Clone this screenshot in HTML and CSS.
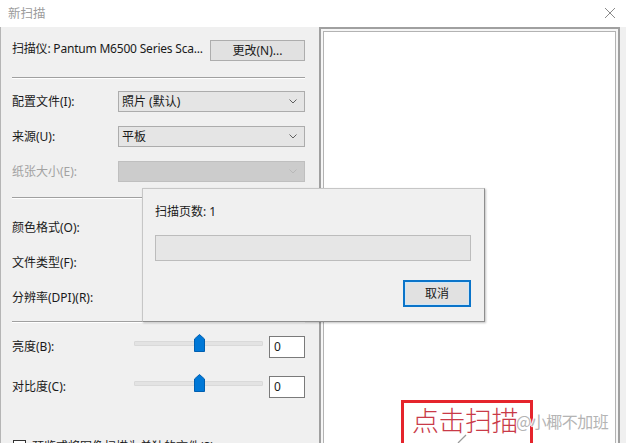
FILE: index.html
```html
<!DOCTYPE html>
<html lang="zh-CN">
<head>
<meta charset="utf-8">
<title>新扫描</title>
<link rel="stylesheet" href="styles.css">
</head>
<body>
<div class="window">
  <header class="titlebar">
    <span class="title">新扫描</span>
    <svg class="close" width="12" height="12" viewBox="0 0 12 12"><path d="M1 1 L11 11 M11 1 L1 11" stroke="#8a8a8a" stroke-width="1" fill="none"/></svg>
  </header>
  <div class="main">
    <section class="left">
      <div class="row scanner">
        <span class="scanner-name">扫描仪: Pantum M6500 Series Sca...</span>
        <span class="btn change">更改(N)...</span>
      </div>
      <div class="sep sep-top"></div>
      <div class="row field">
        <span class="label">配置文件(I):</span>
        <span class="select"><span class="value">照片 (默认)</span><svg class="chev" width="8" height="5" viewBox="0 0 8 5"><path d="M0.5 0.5 L4 4 L7.5 0.5" stroke="#606060" fill="none"/></svg></span>
      </div>
      <div class="row field">
        <span class="label">来源(U):</span>
        <span class="select"><span class="value">平板</span><svg class="chev" width="8" height="5" viewBox="0 0 8 5"><path d="M0.5 0.5 L4 4 L7.5 0.5" stroke="#606060" fill="none"/></svg></span>
      </div>
      <div class="row field last">
        <span class="label disabled">纸张大小(E):</span>
        <span class="select is-disabled"><span class="value"></span><svg class="chev" width="8" height="5" viewBox="0 0 8 5"><path d="M0.5 0.5 L4 4 L7.5 0.5" stroke="#b8b8b8" fill="none"/></svg></span>
      </div>
      <div class="sep sep-mid"></div>
      <div class="plain-rows">
        <div class="row plain"><span class="label">颜色格式(O):</span></div>
        <div class="row plain"><span class="label">文件类型(F):</span></div>
        <div class="row plain"><span class="label">分辨率(DPI)(R):</span></div>
      </div>
      <div class="sep sep-low"></div>
      <div class="row slider-row first">
        <span class="label slabel">亮度(B):</span>
        <span class="slider"><span class="track"></span><svg class="thumb" width="11" height="18" viewBox="0 0 11 18"><path d="M5.5 0.5 L10.5 5 L10.5 17.5 L0.5 17.5 L0.5 5 Z" fill="#0078d7" stroke="#005fb0"/></svg></span>
        <span class="num">0</span>
      </div>
      <div class="row slider-row second">
        <span class="label slabel">对比度(C):</span>
        <span class="slider"><span class="track"></span><svg class="thumb" width="11" height="18" viewBox="0 0 11 18"><path d="M5.5 0.5 L10.5 5 L10.5 17.5 L0.5 17.5 L0.5 5 Z" fill="#0078d7" stroke="#005fb0"/></svg></span>
        <span class="num">0</span>
      </div>
      <div class="row check-row">
        <span class="checkbox"></span>
        <span class="label">预览或将图像扫描为单独的文件(S)</span>
      </div>
    </section>
    <section class="preview"><div class="preview-inner"></div></section>
  </div>

  <div class="dialog">
    <div class="pages">扫描页数: 1</div>
    <div class="progress"></div>
    <div class="dialog-actions"><span class="btn cancel">取消</span></div>
  </div>

  <div class="annot">点击扫描</div>
  <div class="watermark">@小椰不加班</div>
  <svg class="pointer" width="12" height="10" viewBox="0 0 12 10"><path d="M10 1 L2 9" stroke="#9a9a9a" stroke-width="1.2" fill="none"/></svg>
</div>
</body>
</html>
```

FILE: styles.css
```css
html, body {
  margin: 0;
  padding: 0;
}
body {
  width: 626px;
  height: 443px;
  overflow: hidden;
  background: #f0f0f0;
  font-family: "Noto Sans", "Noto Sans CJK SC", sans-serif;
  font-size: 12px;
  color: #1a1a1a;
}
.window {
  position: relative;
  width: 626px;
  height: 443px;
  display: flex;
  flex-direction: column;
}
.titlebar {
  height: 27px;
  flex: none;
  background: #ffffff;
  display: flex;
  align-items: center;
  justify-content: space-between;
  padding: 0 10px 2px 8px;
  box-sizing: border-box;
}
.title {
  font-size: 12.5px;
  color: #9c9c9c;
  line-height: 16px;
  font-family: "Noto Sans CJK SC", sans-serif;
}
.close {
  display: block;
}
.main {
  flex: 1;
  display: flex;
  background: #f0f0f0;
  border-left: 1px solid #b5b5b5;
  min-height: 0;
}
.left {
  width: 318px;
  flex: none;
  box-sizing: border-box;
  padding: 13px 14px 0 11px;
  display: flex;
  flex-direction: column;
}
.row {
  display: flex;
  align-items: center;
  height: 21px;
  flex: none;
}
.label {
  line-height: 16px;
  white-space: nowrap;
}
.label.disabled {
  color: #a2a2a2;
}
.scanner {
  justify-content: space-between;
}
.scanner-name {
  line-height: 16px;
  white-space: nowrap;
  margin-top: -4px;
  letter-spacing: -0.2px;
}
.btn {
  display: flex;
  align-items: center;
  justify-content: center;
  box-sizing: border-box;
  background: #e1e1e1;
  border: 1px solid #adadad;
  line-height: 16px;
}
.change {
  width: 95px;
  height: 21px;
}
.sep {
  flex: none;
  height: 0;
  border-top: 1px solid #a0a0a0;
  border-bottom: 1px solid #ffffff;
}
.sep-top { margin: 16px 0 12px; }
.sep-mid { margin: 15px 0 18px; }
.sep-low { margin: 13px 0 13px; }
.field {
  margin-bottom: 14px;
}
.field.last {
  margin-bottom: 0;
}
.field .label {
  width: 106px;
}
.select {
  flex: 1;
  height: 21px;
  box-sizing: border-box;
  background: #e5e5e5;
  border: 1px solid #acacac;
  display: flex;
  align-items: center;
  justify-content: space-between;
  padding: 0 7px 0 3px;
}
.select .value {
  line-height: 16px;
}
.select.is-disabled {
  background: #cccccc;
  border-color: #bfbfbf;
}
.chev {
  display: block;
}
.plain-rows {
  display: flex;
  flex-direction: column;
  gap: 14px;
}
.slider-row.second {
  margin-top: 19px;
}
.slabel {
  width: 122px;
}
.slider {
  position: relative;
  width: 129px;
  height: 21px;
  flex: none;
  align-self: flex-start;
}
.track {
  display: block;
  margin-top: 5px;
  height: 3px;
  background: #e3e3e3;
  border: 1px solid #d9d9d9;
  border-radius: 1px;
}
.thumb {
  position: absolute;
  left: 60px;
  top: -2px;
}
.num {
  margin-left: 6px;
  width: 36px;
  height: 22px;
  box-sizing: border-box;
  background: #ffffff;
  border: 1px solid #7a7a7a;
  padding: 0 4px;
  line-height: 19px;
}
.check-row {
  margin-top: 40px;
  gap: 6px;
  align-items: flex-start;
}
.checkbox {
  width: 11px;
  height: 11px;
  margin-top: 3px;
  margin-left: 1px;
  border: 1px solid #333;
  background: #fff;
  flex: none;
}
.check-row .label {
  line-height: 18px;
  margin-top: 1px;
}
.preview {
  width: 301px;
  flex: none;
  box-sizing: border-box;
  border: 2px solid #a0a0a0;
  border-bottom: none;
  padding: 2px 2px 0;
  background: #f6f6f6;
  display: flex;
}
.preview-inner {
  flex: 1;
  background: #ffffff;
  border: 1px solid #b3b3b3;
  border-bottom: none;
}

/* overlay progress dialog */
.dialog {
  position: absolute;
  left: 142px;
  top: 188px;
  width: 343px;
  height: 134px;
  box-sizing: border-box;
  background: #f0f0f0;
  border: 1px solid #c6c6c6;
  border-right-color: #8e8e8e;
  border-bottom-color: #8e8e8e;
  box-shadow: 1px 1px 2px rgba(0, 0, 0, 0.25);
  padding: 15px 13px 0 12px;
  display: flex;
  flex-direction: column;
}
.pages {
  line-height: 16px;
}
.progress {
  margin-top: 15px;
  height: 26px;
  box-sizing: border-box;
  background: #e6e6e6;
  border: 1px solid #bcbcbc;
}
.dialog-actions {
  display: flex;
  justify-content: flex-end;
  margin-top: 19px;
}
.cancel {
  width: 68px;
  height: 27px;
  border: 2px solid #0a74c9;
  box-shadow: inset 0 0 0 1px #cfe6f7;
  background: #e1e1e1;
}

/* annotations drawn over the screenshot */
.annot {
  position: absolute;
  left: 401px;
  top: 400px;
  width: 132px;
  height: 50px;
  box-sizing: border-box;
  border: 3px solid #e5242c;
  color: #c93a48;
  font-family: "Noto Sans CJK SC", sans-serif;
  font-weight: 300;
  font-size: 27px;
  line-height: 34px;
  padding-left: 8px;
  letter-spacing: -0.5px;
  white-space: nowrap;
}
.watermark {
  position: absolute;
  left: 516px;
  top: 411px;
  color: #b4b4b4;
  font-family: "Noto Sans CJK SC", sans-serif;
  font-size: 16px;
  line-height: 20px;
  letter-spacing: -0.5px;
  text-shadow: 1px 0 0 #fff, -1px 0 0 #fff, 0 1px 0 #fff, 0 -1px 0 #fff;
  white-space: nowrap;
}
.pointer {
  position: absolute;
  left: 456px;
  top: 434px;
}
```
